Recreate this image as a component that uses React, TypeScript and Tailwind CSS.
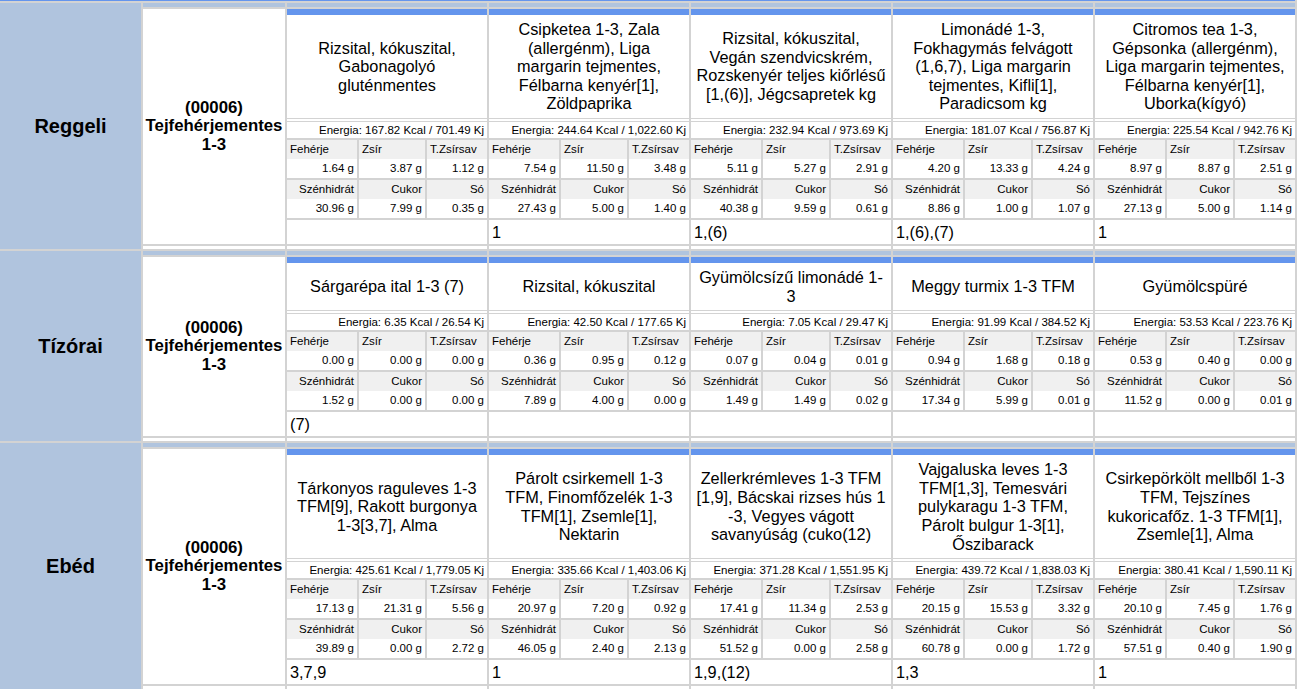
import React from "react";

interface DayMenu {
  lines: string[];
  kcal: string;
  kj: string;
  top: [string, string, string];
  bottom: [string, string, string];
  allergens: string;
}

interface MealBlock {
  name: string;
  diet: string;
  days: DayMenu[];
}

const meals: MealBlock[] = [
  {
    name: "Reggeli",
    diet: "(00006) Tejfehérjementes 1-3",
    days: [
      {
        lines: ["Rizsital, kókuszital,", "Gabonagolyó", "gluténmentes"],
        kcal: "167.82",
        kj: "701.49",
        top: ["1.64", "3.87", "1.12"],
        bottom: ["30.96", "7.99", "0.35"],
        allergens: "",
      },
      {
        lines: ["Csipketea 1-3, Zala", "(allergénm), Liga", "margarin tejmentes,", "Félbarna kenyér[1],", "Zöldpaprika"],
        kcal: "244.64",
        kj: "1,022.60",
        top: ["7.54", "11.50", "3.48"],
        bottom: ["27.43", "5.00", "1.40"],
        allergens: "1",
      },
      {
        lines: ["Rizsital, kókuszital,", "Vegán szendvicskrém,", "Rozskenyér teljes kiőrlésű", "[1,(6)], Jégcsapretek kg"],
        kcal: "232.94",
        kj: "973.69",
        top: ["5.11", "5.27", "2.91"],
        bottom: ["40.38", "9.59", "0.61"],
        allergens: "1,(6)",
      },
      {
        lines: ["Limonádé 1-3,", "Fokhagymás felvágott", "(1,6,7), Liga margarin", "tejmentes, Kifli[1],", "Paradicsom kg"],
        kcal: "181.07",
        kj: "756.87",
        top: ["4.20", "13.33", "4.24"],
        bottom: ["8.86", "1.00", "1.07"],
        allergens: "1,(6),(7)",
      },
      {
        lines: ["Citromos tea 1-3,", "Gépsonka (allergénm),", "Liga margarin tejmentes,", "Félbarna kenyér[1],", "Uborka(kígyó)"],
        kcal: "225.54",
        kj: "942.76",
        top: ["8.97", "8.87", "2.51"],
        bottom: ["27.13", "5.00", "1.14"],
        allergens: "1",
      },
    ],
  },
  {
    name: "Tízórai",
    diet: "(00006) Tejfehérjementes 1-3",
    days: [
      {
        lines: ["Sárgarépa ital 1-3 (7)"],
        kcal: "6.35",
        kj: "26.54",
        top: ["0.00", "0.00", "0.00"],
        bottom: ["1.52", "0.00", "0.00"],
        allergens: "(7)",
      },
      {
        lines: ["Rizsital, kókuszital"],
        kcal: "42.50",
        kj: "177.65",
        top: ["0.36", "0.95", "0.12"],
        bottom: ["7.89", "4.00", "0.00"],
        allergens: "",
      },
      {
        lines: ["Gyümölcsízű limonádé 1-", "3"],
        kcal: "7.05",
        kj: "29.47",
        top: ["0.07", "0.04", "0.01"],
        bottom: ["1.49", "1.49", "0.02"],
        allergens: "",
      },
      {
        lines: ["Meggy turmix 1-3 TFM"],
        kcal: "91.99",
        kj: "384.52",
        top: ["0.94", "1.68", "0.18"],
        bottom: ["17.34", "5.99", "0.01"],
        allergens: "",
      },
      {
        lines: ["Gyümölcspüré"],
        kcal: "53.53",
        kj: "223.76",
        top: ["0.53", "0.40", "0.00"],
        bottom: ["11.52", "0.00", "0.01"],
        allergens: "",
      },
    ],
  },
  {
    name: "Ebéd",
    diet: "(00006) Tejfehérjementes 1-3",
    days: [
      {
        lines: ["Tárkonyos raguleves 1-3", "TFM[9], Rakott burgonya", "1-3[3,7], Alma"],
        kcal: "425.61",
        kj: "1,779.05",
        top: ["17.13", "21.31", "5.56"],
        bottom: ["39.89", "0.00", "2.72"],
        allergens: "3,7,9",
      },
      {
        lines: ["Párolt csirkemell 1-3", "TFM, Finomfőzelék 1-3", "TFM[1], Zsemle[1],", "Nektarin"],
        kcal: "335.66",
        kj: "1,403.06",
        top: ["20.97", "7.20", "0.92"],
        bottom: ["46.05", "2.40", "2.13"],
        allergens: "1",
      },
      {
        lines: ["Zellerkrémleves 1-3 TFM", "[1,9], Bácskai rizses hús 1", "-3, Vegyes vágott", "savanyúság (cuko(12)"],
        kcal: "371.28",
        kj: "1,551.95",
        top: ["17.41", "11.34", "2.53"],
        bottom: ["51.52", "0.00", "2.58"],
        allergens: "1,9,(12)",
      },
      {
        lines: ["Vajgaluska leves 1-3", "TFM[1,3], Temesvári", "pulykaragu 1-3 TFM,", "Párolt bulgur 1-3[1],", "Őszibarack"],
        kcal: "439.72",
        kj: "1,838.03",
        top: ["20.15", "15.53", "3.32"],
        bottom: ["60.78", "0.00", "1.72"],
        allergens: "1,3",
      },
      {
        lines: ["Csirkepörkölt mellből 1-3", "TFM, Tejszínes", "kukoricafőz. 1-3 TFM[1],", "Zsemle[1], Alma"],
        kcal: "380.41",
        kj: "1,590.11",
        top: ["20.10", "7.45", "1.76"],
        bottom: ["57.51", "0.40", "1.90"],
        allergens: "1",
      },
    ],
  },
];

const topLabels = ["Fehérje", "Zsír", "T.Zsírsav"];
const bottomLabels = ["Szénhidrát", "Cukor", "Só"];

const NutrientCell = ({ label, value, alignLabel }: { label: string; value: string; alignLabel: "left" | "right" }) => (
  <div className="flex flex-col">
    <div
      className={`h-[19px] bg-[#f0f0f0] px-[3px] text-[11.5px] leading-[19px] whitespace-nowrap ${
        alignLabel === "left" ? "text-left" : "text-right"
      }`}
    >
      {label}
    </div>
    <div className="h-[19px] bg-white pr-[3px] text-right text-[11.5px] leading-[19px] whitespace-nowrap">
      {value} g
    </div>
  </div>
);

const DayCell = ({ day }: { day: DayMenu }) => (
  <div className="flex flex-col bg-[#d3d3d3]">
    <div className="flex flex-1 flex-col bg-white">
      <div className="h-[6px] bg-[#6495ed]" />
      <div className="flex flex-1 flex-col items-center justify-center py-[5px] text-center text-[16.3px] leading-[18.6px]">
        {day.lines.map((line, i) => (
          <span key={i} className="block whitespace-nowrap">
            {line}
          </span>
        ))}
      </div>
    </div>
    <div className="h-[4px] border-y border-[#d3d3d3] bg-white" />
    <div className="h-[16px] bg-white pr-[3px] text-right text-[11.5px] leading-[16px] whitespace-nowrap">
      Energia: {day.kcal} Kcal / {day.kj} Kj
    </div>
    <div className="mt-[2px] grid grid-cols-[70px_66px_60px] gap-[2px]">
      {topLabels.map((label, i) => (
        <NutrientCell key={label} label={label} value={day.top[i]} alignLabel="left" />
      ))}
      {bottomLabels.map((label, i) => (
        <NutrientCell key={label} label={label} value={day.bottom[i]} alignLabel="right" />
      ))}
    </div>
    <div className="mt-[2px] h-[24px] bg-white px-[3px] text-[16.3px] leading-[24px]">{day.allergens}</div>
  </div>
);

export default function App() {
  return (
    <div className="min-h-screen bg-white font-['Liberation_Sans',Arial,sans-serif] text-black">
      <div className="grid w-[1297px] grid-cols-[141px_142px_repeat(5,200px)] gap-[2px] bg-[#d3d3d3] pr-[2px]">
        <div className="col-span-7 h-[1px] bg-[#6495ed]" />
        {meals.map((meal) => (
          <React.Fragment key={meal.name}>
            <div className="row-span-3 flex items-center justify-center bg-[#b0c4de] text-[20px] font-bold">
              {meal.name}
            </div>
            {Array.from({ length: 6 }).map((_, i) => (
              <div key={`a${i}`} className="h-[4px] bg-[#b0c4de]" />
            ))}
            <div className="flex items-center justify-center bg-white text-center text-[16.8px] font-bold leading-[18.6px]">
              {meal.diet}
            </div>
            {meal.days.map((day, i) => (
              <DayCell key={i} day={day} />
            ))}
            {Array.from({ length: 6 }).map((_, i) => (
              <div key={`c${i}`} className="h-[3px] bg-white" />
            ))}
          </React.Fragment>
        ))}
      </div>
    </div>
  );
}
